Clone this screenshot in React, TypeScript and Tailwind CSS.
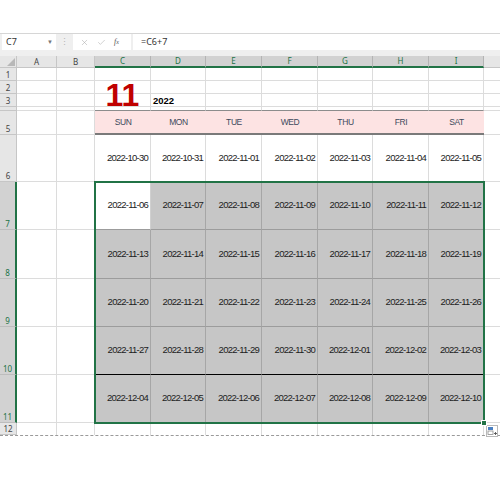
import React from 'react';
import { X, Check } from 'lucide-react';

const COLS = [
  { id: 'A', w: 'w-[40px]' },
  { id: 'B', w: 'w-[38px]' },
  { id: 'C', w: 'w-[56px]' },
  { id: 'D', w: 'w-[55px]' },
  { id: 'E', w: 'w-[56px]' },
  { id: 'F', w: 'w-[56px]' },
  { id: 'G', w: 'w-[55px]' },
  { id: 'H', w: 'w-[56px]' },
  { id: 'I', w: 'w-[55px]' },
];
const CAL = COLS.slice(2);
const DAYS = ['SUN', 'MON', 'TUE', 'WED', 'THU', 'FRI', 'SAT'];

function dateStr(i: number) {
  return new Date(Date.UTC(2022, 9, 30) + i * 86400000).toISOString().slice(0, 10);
}

const GRID = 'border-r border-b border-[#dcdcdc]';
const CELLFONT = { fontFamily: '"Liberation Sans", Arial, sans-serif' };

function RowHead({ n, sel }: { n?: string; sel?: boolean }) {
  return (
    <div
      className={`w-[17px] shrink-0 h-full flex items-end justify-center pb-[1px] text-[8px] leading-none border-b ${
        sel
          ? 'bg-[#d2d2d2] border-r-2 border-r-[#217346] border-b-[#bdbdbd] text-[#217346]'
          : 'bg-[#e6e6e6] border-r border-r-[#c6c6c6] border-b-[#c6c6c6] text-[#444]'
      }`}
    >
      {n}
    </div>
  );
}

function Blank({ w }: { w: string }) {
  return <div className={`${w} shrink-0 h-full ${GRID}`} />;
}

function Filler() {
  return <div className="flex-1 h-full border-b border-[#dcdcdc]" />;
}

function Row({ h, children, extra }: { h: string; children: React.ReactNode; extra?: string }) {
  return <div className={`flex ${h} ${extra ?? ''}`}>{children}</div>;
}

function QuickAnalysis() {
  return (
    <svg width="12" height="12" viewBox="0 0 12 12">
      <rect x="0.5" y="0.5" width="11" height="11" fill="#fff" stroke="#b9b9b9" />
      <rect x="2" y="2" width="5" height="3" fill="#4a7fc1" />
      <rect x="2" y="6" width="5" height="3.5" fill="#fff" stroke="#8a8a8a" strokeWidth="0.8" />
      <path d="M8 8.5h3M9.5 7v3" stroke="#555" strokeWidth="0.9" />
    </svg>
  );
}

export default function App() {
  const row6 = [0, 1, 2, 3, 4, 5, 6].map((i) => dateStr(i));
  const selRows = [0, 1, 2, 3, 4].map((r) => [0, 1, 2, 3, 4, 5, 6].map((c) => dateStr(7 + r * 7 + c)));
  const selHeights = ['h-[48px]', 'h-[49px]', 'h-[48px]', 'h-[48px]', 'h-[48px]'];
  const selBottom = ['border-b-[#9c9c9c]', 'border-b-[#9c9c9c]', 'border-b-[#9c9c9c]', 'border-b-black', 'border-b-[#9c9c9c]'];

  return (
    <div className="w-[500px] h-[500px] bg-white overflow-hidden" style={{ fontFamily: '"Noto Sans", "Open Sans", sans-serif' }}>
      <div className="h-[33px]" />
      {/* formula bar */}
      <div className="h-[23px] bg-[#efefef] border-t border-[#d6d6d6] flex items-start">
        <div className="ml-[2px] w-[54px] h-[16px] bg-white flex items-center justify-between pl-[4px] pr-[3px] text-[9px] text-[#333]">
          <span>C7</span>
          <span className="text-[6px] text-[#777]">▼</span>
        </div>
        <div className="w-[17px] h-[16px] flex items-center justify-center text-[9px] text-[#b5b5b5]">⋮</div>
        <div className="w-[58px] h-[16px] bg-white flex items-center pl-[7px] gap-[8px] text-[#a8a8a8]">
          <X size={9} strokeWidth={1.4} />
          <Check size={9} strokeWidth={1.4} />
          <span className="text-[8px] italic text-[#555]" style={{ fontFamily: '"Liberation Serif", serif' }}>
            f<span className="text-[6px]">x</span>
          </span>
        </div>
        <div className="ml-[2px] flex-1 h-[16px] bg-white flex items-center pl-[8px] text-[9px] text-[#333]">=C6+7</div>
      </div>

      {/* sheet */}
      <div className="relative">
        {/* column headers */}
        <Row h="h-[12px]">
          <div className="w-[17px] shrink-0 h-full bg-[#e6e6e6] border-r border-b border-[#c6c6c6] flex items-end justify-end p-[1px]">
            <svg width="8" height="8" viewBox="0 0 8 8">
              <polygon points="8,0 8,8 0,8" fill="#b8b8b8" />
            </svg>
          </div>
          {COLS.map((c, i) => (
            <div
              key={c.id}
              className={`${c.w} shrink-0 h-full flex items-center justify-center text-[8px] leading-none ${
                i < 2
                  ? 'bg-[#e6e6e6] border-r border-b border-[#c6c6c6] text-[#444]'
                  : 'bg-[#d2d2d2] border-r border-r-[#b4b4b4] border-b-2 border-b-[#217346] text-[#217346]'
              }`}
            >
              {c.id}
            </div>
          ))}
          <div className="flex-1 h-full bg-[#e6e6e6] border-b border-[#c6c6c6]" />
        </Row>

        {/* rows 1-2 */}
        {['1', '2'].map((n) => (
          <Row key={n} h="h-[13px]">
            <RowHead n={n} />
            {COLS.map((c) => (
              <Blank key={c.id} w={c.w} />
            ))}
            <Filler />
          </Row>
        ))}

        {/* row 3 */}
        <Row h="h-[13px]">
          <RowHead n="3" />
          <Blank w="w-[40px]" />
          <Blank w="w-[38px]" />
          <div className={`w-[56px] shrink-0 h-full ${GRID} flex items-end justify-center`}>
            <span className="text-[32px] font-bold leading-none mb-[-5px] text-[#c00000]" style={CELLFONT}>
              11
            </span>
          </div>
          <div className={`w-[55px] shrink-0 h-full ${GRID} flex items-end pl-[2px]`}>
            <span className="text-[9.5px] font-bold leading-[11px] text-black" style={CELLFONT}>
              2022
            </span>
          </div>
          {COLS.slice(4).map((c) => (
            <Blank key={c.id} w={c.w} />
          ))}
          <Filler />
        </Row>

        {/* row 4 (hidden) */}
        <Row h="h-[4px]">
          <RowHead />
          <Blank w="w-[40px]" />
          <Blank w="w-[38px]" />
          {CAL.map((c) => (
            <div key={c.id} className={`${c.w} shrink-0 h-full border-r border-r-[#dcdcdc] border-b border-b-[#8c8c8c]`} />
          ))}
          <Filler />
        </Row>

        {/* row 5 */}
        <Row h="h-[24px]">
          <RowHead n="5" />
          <Blank w="w-[40px]" />
          <Blank w="w-[38px]" />
          {CAL.map((c, i) => (
            <div
              key={c.id}
              className={`${c.w} shrink-0 h-full bg-[#fde3e3] border-b-2 border-b-[#7a7a7a] flex items-center justify-center text-[8.5px] tracking-[-0.4px] text-[#3e4a5c]`}
              style={CELLFONT}
            >
              {DAYS[i]}
            </div>
          ))}
          <Filler />
        </Row>

        {/* row 6 */}
        <Row h="h-[47px]">
          <RowHead n="6" />
          <Blank w="w-[40px]" />
          <Blank w="w-[38px]" />
          {CAL.map((c, i) => (
            <div
              key={c.id}
              className={`${c.w} shrink-0 h-full ${GRID} flex items-center justify-end pr-[2px] text-[9.5px] tracking-[-0.75px] text-[#1c1c1c]`}
              style={CELLFONT}
            >
              {row6[i]}
            </div>
          ))}
          <Filler />
        </Row>

        {/* rows 7-11 selected */}
        {selRows.map((dates, r) => (
          <Row key={r} h={selHeights[r]}>
            <RowHead n={String(7 + r)} sel />
            <Blank w="w-[40px]" />
            <Blank w="w-[38px]" />
            {CAL.map((c, i) => (
              <div
                key={c.id}
                className={`${c.w} shrink-0 h-full border-r border-b ${selBottom[r]} ${
                  r === 0 && i === 0 ? 'bg-white border-r-[#d0d0d0]' : 'bg-[#c6c6c6] border-r-[#a6a6a6]'
                } flex items-center justify-end pr-[2px] text-[9.5px] tracking-[-0.75px] text-[#1c1c1c]`}
                style={CELLFONT}
              >
                {dates[i]}
              </div>
            ))}
            <Filler />
          </Row>
        ))}

        {/* row 12 */}
        <Row h="h-[13px]" extra="border-b border-dashed border-[#9a9a9a]">
          <RowHead n="12" />
          {COLS.map((c) => (
            <div key={c.id} className={`${c.w} shrink-0 h-full border-r border-[#dcdcdc]`} />
          ))}
          <div className="flex-1 h-full flex items-start justify-center pt-[2px]">
            <QuickAnalysis />
          </div>
        </Row>

        {/* selection outline */}
        <div className="absolute left-[94px] top-[125px] w-[391px] h-[243px] border-2 border-[#217346] pointer-events-none" />
        <div className="absolute left-[481px] top-[364px] w-[6px] h-[6px] bg-[#217346] border border-white pointer-events-none" />
      </div>
    </div>
  );
}
